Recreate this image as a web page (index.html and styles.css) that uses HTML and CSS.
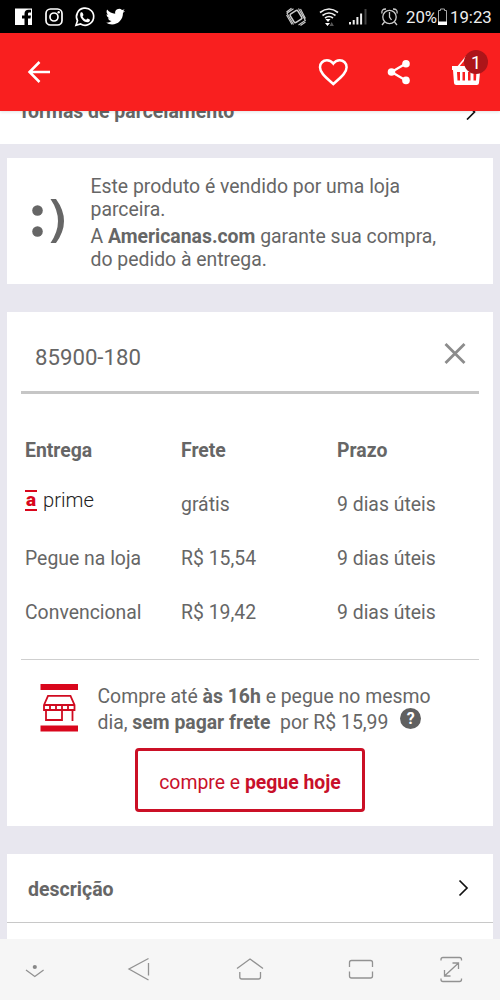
FILE: index.html
```html
<!DOCTYPE html>
<html lang="pt-BR">
<head>
<meta charset="utf-8">
<title>Americanas</title>
<link rel="stylesheet" href="styles.css">
</head>
<body>
<div class="phone">
  <div class="status">
    <svg class="social" width="112" height="33" viewBox="15 0 112 33">
      <path fill="#fff" fill-rule="evenodd" d="M15 8.500h17V25h-4v-6.500h2.500l.5-3h-3v-1.500c0-1 .4-1.500 1.500-1.500H31V9.800h-2.500c-2.500 0-4 1.400-4 4v1.700H22v3h2.500V25H15z"/>
      <g fill="none" stroke="#fff" stroke-width="1.700"><rect x="46" y="9" width="16" height="16" rx="4.500"/><circle cx="54" cy="17" r="4"/></g>
      <circle cx="58.700" cy="12.300" r="1.200" fill="#fff"/>
      <path d="M76 25.200l1.500-4.500A8.600 8.600 0 1 1 80.600 24z" fill="none" stroke="#fff" stroke-width="1.700"/>
      <path fill="#fff" d="M80.500 12.700c1-.9 1.900-.5 2.200.4l.7 1.700c.2.600-.7 1.300-.8 1.600.6 1.500 2 2.700 3.500 3.300.5-.2 1-1.300 1.600-1.200l2 1c.8.500-.2 2.300-1.500 2.700-4 .8-9.500-5-7.700-9.500z"/>
      <path fill="#fff" d="M125 10.700c-.7.300-1.500.5-2.200.6.800-.5 1.400-1.200 1.700-2.100-.8.400-1.600.7-2.500.9a4 4 0 0 0-6.800 3.600c-3.300-.2-6.100-1.700-8.100-4.100-1.100 1.900-.5 4.100 1.200 5.200-.6 0-1.200-.2-1.800-.5 0 1.900 1.400 3.500 3.200 3.900-.6.200-1.200.2-1.800.1.500 1.600 2 2.700 3.700 2.700a8 8 0 0 1-5.800 1.600c7.500 4.700 17.300.1 17.200-9.800.8-.6 1.500-1.300 2-2.100z"/>
    </svg>
    <svg class="signals" width="114" height="33" viewBox="285 0 114 33">
      <g fill="none" stroke="#ccc" stroke-width="1.100">
        <rect x="291.500" y="11.500" width="9" height="10" rx="1.500" transform="rotate(-32 296 16.500)" stroke-width="1.600"/>
        <path d="M293.500 8.800l-6.500 4.400 6.500 11.300M291.500 8.200L286.500 12M286.500 15l5.500 9.500M298.500 25l6.800-4.600-6.800-11.800M300.500 25.500l5-3.500M305.500 18.500L300.500 9"/>
      </g>
      <g fill="none" stroke="#eee" stroke-width="1.600"><path d="M320 12.500q9-7 18 0M322.500 15.500q6.500-5 13 0M325 18q4-3 8 0"/></g>
      <path fill="#fff" d="M325.500 19h5L328 22zM325 23h5L327.500 26z"/><path fill="#555" d="M329.500 26l2.200-4 2.200 4z"/>
      <path fill="#eee" d="M349 22h2v2.500h-2zM352.700 20h2v4.500h-2zM356.400 17h2v7.500h-2zM360.100 13.500h2v11h-2z"/><path fill="#444" d="M364.500 9h2v15.500h-2z"/>
      <g fill="none" stroke="#ccc" stroke-width="1.300"><circle cx="389.500" cy="17" r="6.700"/><path d="M389.500 12v5l2 3M382 13.500q-1-4.500 4-4.500M397 13.500q1-4.500-4-4.500M384.500 22l-2.500 3M394.500 22l2.500 3"/></g>
    </svg>
    <span class="clock">20%</span>
    <svg width="11" height="33" viewBox="438 0 11 33"><path d="M439.500 10.500h2V9h4v1.500h2v14h-8z" fill="none" stroke="#aaa" stroke-width="1"/><path fill="#fff" d="M439 21.500h9v3.500h-9z"/></svg>
    <span class="clock time">19:23</span>
  </div>

  <header class="bar">
    <svg class="back" width="26" height="26" viewBox="26 59 26 26"><path d="M50 72H29.500M39.500 62L29.500 72l10 10" fill="none" stroke="#fff" stroke-width="2.500"/></svg>
    <div class="actions">
      <svg width="32" height="30" viewBox="317 57 32 30"><path d="M333.300 84l-2-1.800C324 75.800 320 72 320 67.200c0-4 3-6.900 6.900-6.900 2.500 0 4.900 1.300 6.400 3.300 1.500-2 3.900-3.300 6.400-3.300 3.900 0 6.900 2.900 6.900 6.900 0 4.800-4 8.600-11.300 15z" fill="none" stroke="#fff" stroke-width="2.500"/></svg>
      <svg width="26" height="28" viewBox="386 58 26 28"><path d="M406 63.500L391.500 72l14.500 8.500" fill="none" stroke="#fff" stroke-width="2.300"/><g fill="#fff"><circle cx="406" cy="63.700" r="3.800"/><circle cx="391.500" cy="72" r="3.800"/><circle cx="406" cy="80.400" r="3.800"/></g></svg>
      <div class="basket">
        <svg width="32" height="32" viewBox="449.500 56 32 32"><path d="M457 67.500l9-11" fill="none" stroke="#fff" stroke-width="1.600"/><path fill="#fff" fill-rule="evenodd" d="M451.500 66h29.500v4h-1.300l-1.200 13q-.2 2-2.200 2h-20.600q-2 0-2.200-2l-1-13h-1zM456.500 72l.5 8.500h2.500V72zM462 72v8.500h2.500V72zM467.500 72v8.500h2.500V72zM473 72v8.500h2.500l.4-8.500z"/></svg>
        <span class="count">1</span>
      </div>
    </div>
  </header>

  <main class="content">
    <section class="installments">
      <strong>formas de parcelamento</strong>
      <svg width="14" height="18" viewBox="464 101 14 18"><path d="M467 103.500l7.500 7.500-7.500 7.500" fill="none" stroke="#111" stroke-width="1.700"/></svg>
    </section>

    <section class="card partner">
      <svg class="smile" width="40" height="50" viewBox="28 195 40 50"><g fill="#666"><circle cx="37.500" cy="210.500" r="5.300"/><circle cx="37.500" cy="231.500" r="5.300"/><path d="M50.500 199h5.500q16 22 0 44h-5.500q15-22 0-44z"/></g></svg>
      <div class="message">
        <p>Este produto é vendido por uma loja<br>parceira.</p>
        <p>A <b>Americanas.com</b> garante sua compra,<br>do pedido à entrega.</p>
      </div>
    </section>

    <section class="card shipping">
      <div class="zip">
        <span>85900-180</span>
        <svg width="22" height="22" viewBox="444 343 22 22"><path d="M445.500 344l19 19m0-19l-19 19" fill="none" stroke="#8c8c8c" stroke-width="2.800"/></svg>
      </div>
      <div class="rates">
        <b>Entrega</b><b>Frete</b><b>Prazo</b>
        <span class="prime"><i class="brand">a</i><span>prime</span></span><span>grátis</span><span>9 dias úteis</span>
        <span>Pegue na loja</span><span>R$ 15,54</span><span>9 dias úteis</span>
        <span>Convencional</span><span>R$ 19,42</span><span>9 dias úteis</span>
      </div>
      <div class="pickup">
        <svg width="38" height="48" viewBox="40 684 38 48"><path fill="#d9061c" d="M40.500 684H78v6H40.500zM40.500 725.500H78v6H40.500z"/><g fill="none" stroke="#d00b20" stroke-width="1.800"><path d="M44 705l4-9.200h22.500l4 9.200v5H44zM44 705h30.500M50 705v5M56 705v5M62 705v5M68 705v5M46 710V720h16v-10M72.500 710V721"/></g></svg>
        <p>Compre até <b>às 16h</b> e pegue no mesmo<br>dia, <b>sem pagar frete</b>&nbsp; por R$ 15,99 <span class="help">?</span></p>
      </div>
      <button class="buy">compre e <b>pegue hoje</b></button>
    </section>

    <section class="card details">
      <div class="detail"><b>descrição</b>
        <svg width="14" height="18" viewBox="457 879 14 18"><path d="M459.500 880.500l7.500 7.500-7.500 7.500" fill="none" stroke="#111" stroke-width="1.700"/></svg>
      </div>
    </section>
  </main>

  <nav class="nav">
    <svg width="500" height="61" viewBox="0 939 500 61">
      <g fill="none" stroke="#929292" stroke-width="1.300">
        <path d="M26 970l8.800 6.500 8.800-6.500M148.500 958.500L129 969l19.500 11M148.500 963v12.500"/>
        <path d="M237 968.500l13-9.500 13 9.500M239.800 972v5q0 2 2 2h16.700q2 0 2-2v-5"/>
        <path d="M349.500 967v-4.500q0-2 2-2h19q2 0 2 2v4.500M349.500 971.500v4.500q0 2 2 2h19q2 0 2-2v-4.500"/>
        <path d="M441 960.500v-1q0-2 2-2h16.500q2 0 2 2v1M441 978.500v1q0 2 2 2h16.500q2 0 2-2v-1M444.500 976l14-13M452.500 963h6v6M444.500 970v6h6"/>
      </g>
      <circle cx="34.800" cy="967" r="2.100" fill="#888"/>
    </svg>
  </nav>
</div>
</body>
</html>
```
FILE: styles.css
```css
* { box-sizing: border-box; }
body { margin: 0; font-family: Roboto, sans-serif; color: #666; }
p { margin: 0; }
svg { display: block; flex: none; }
b, strong { font-weight: 700; }
.phone { width: 500px; height: 1000px; display: flex; flex-direction: column; overflow: hidden; background: #e8e7ef; }

.status { height: 33px; flex: none; background: #000; color: #eee; display: flex; align-items: center; padding-left: 15px; }
.signals { margin-left: 158px; }
.clock { width: 31px; margin-left: 7px; font-size: 16.8px; line-height: 33px; white-space: nowrap; padding-top: 1px; }
.status .time { width: 44px; margin-left: 2px; }

.bar { height: 78px; flex: none; background: #f91f1f; display: flex; align-items: center; justify-content: space-between; padding: 0 11px 0 26px; z-index: 1; box-shadow: 0 1px 3px rgba(0,0,0,.12); }
.actions { display: flex; align-items: center; }
.actions > svg + svg { margin-left: 37px; }
.basket { position: relative; margin-left: 38px; width: 39px; }
.count { position: absolute; left: 14px; top: -6px; width: 24px; height: 24px; border-radius: 50%; background: #ad1519; color: #fff; text-align: center; font-size: 18px; line-height: 25px; }

.content { flex: 1; min-height: 0; overflow: hidden; }
.installments { height: 42px; margin-top: -9px; background: #fff; padding: 0 22px 0 21px; display: flex; justify-content: space-between; font-size: 19.45px; line-height: 20px; }
.card { margin: 0 7px; background: #fff; }
.partner { height: 126px; margin-top: 14px; display: flex; padding: 0 0 0 21px; }
.smile { margin-top: 37px; }
.message { margin-left: 22.5px; padding-top: 17px; font-size: 19.4px; line-height: 23px; white-space: nowrap; }
.message p + p { margin-top: 4px; }

.shipping { height: 514px; margin-top: 28px; padding: 0 14px; }
.zip { height: 82px; border-bottom: 3px solid #c6c6c6; padding: 10px 13px 0 14px; display: flex; align-items: center; justify-content: space-between; font-size: 22.2px; }
.zip svg { margin-top: -6px; }
.rates { height: 266px; padding: 29px 0 0 4px; display: grid; grid-template-columns: 156px 156px 1fr; grid-auto-rows: 54px; align-items: center; border-bottom: 1px solid #cfcfcf; font-size: 19.4px; }
.prime { display: flex; align-items: center; margin-top: -8px; color: #222; font-size: 20.2px; font-weight: 300; }
.brand { width: 12px; height: 21px; margin-right: 6px; border-top: 2px solid #d9061c; border-bottom: 2px solid #d9061c; color: #d9061c; font-style: normal; font-weight: 900; font-size: 19px; line-height: 16px; text-align: center; }
.pickup { height: 88px; display: flex; align-items: flex-start; padding: 24px 0 0 19px; }
.pickup p { margin: 0 0 0 19.5px; font-size: 19.4px; line-height: 26px; white-space: nowrap; }
.help { display: inline-block; width: 21px; height: 21px; margin-left: 7px; border-radius: 50%; background: #606060; color: #fff; font-size: 16px; font-weight: 700; line-height: 21px; text-align: center; vertical-align: 5px; margin-top: -7px; }
.buy { display: block; width: 230px; height: 64px; margin: 0 auto; padding: 5px 0 0; background: #fff; border: 3px solid #cb1026; border-radius: 4px; color: #c8102a; font: 19.4px Roboto, sans-serif; }

.details { height: 85px; margin-top: 28px; }
.detail { height: 69px; border-bottom: 1px solid #c8c8c8; display: flex; align-items: center; justify-content: space-between; padding: 0 22px 0 21px; font-size: 19.5px; }
.detail b { padding-top: 2px; }
.nav { height: 61px; flex: none; background: #f6f6f6; }
```
